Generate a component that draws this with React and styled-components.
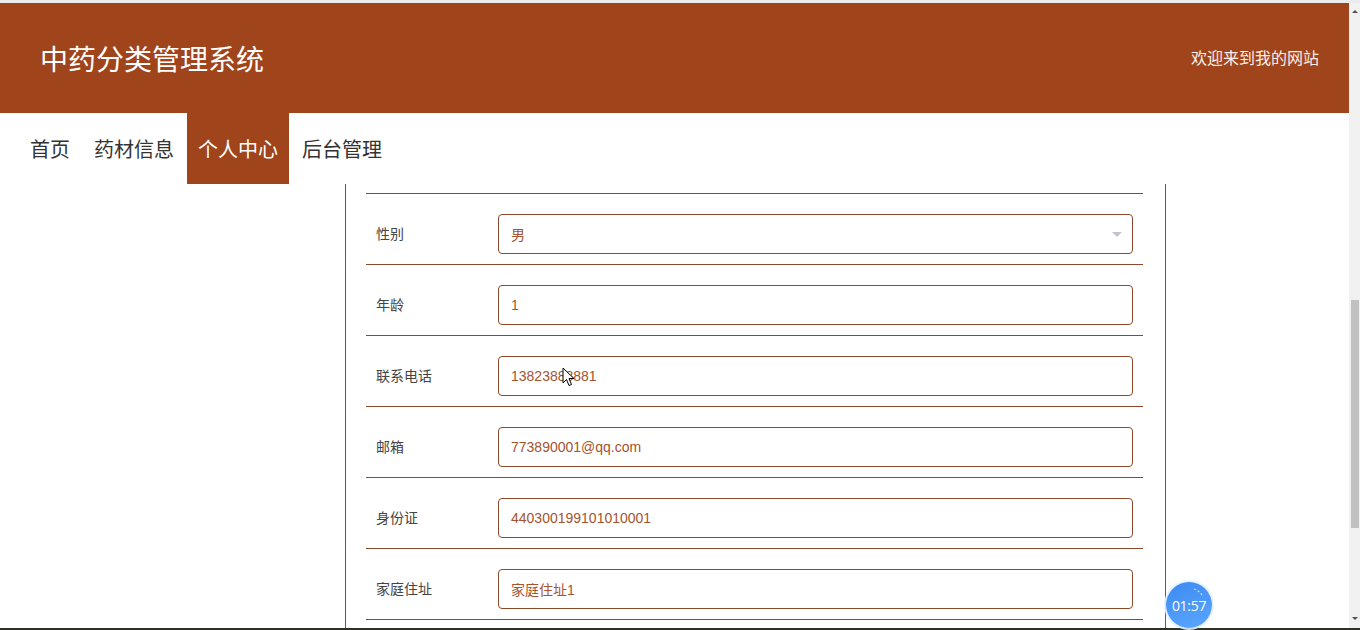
import React from "react";
import styled, { createGlobalStyle } from "styled-components";

const Global = createGlobalStyle`
  html, body { margin: 0; padding: 0; height: 630px; overflow: hidden; background: #fff; }
  body { font-family: "Noto Sans CJK SC", "Noto Sans", sans-serif; }
  * { box-sizing: border-box; }
`;

const Screen = styled.div`
  position: relative;
  width: 1360px;
  height: 630px;
  display: flex;
  flex-direction: column;
  overflow: hidden;
`;

const TopStrip = styled.div`
  height: 3px;
  background: #ebebeb;
  flex: none;
`;

const BottomStrip = styled.div`
  height: 2px;
  background: #2f3124;
  flex: none;
`;

const Body = styled.div`
  flex: 1;
  display: flex;
  min-height: 0;
`;

const Page = styled.div`
  flex: 1;
  min-width: 0;
  overflow: hidden;
  display: flex;
  flex-direction: column;
`;

const Header = styled.header`
  height: 110px;
  flex: none;
  background: #a0441c;
  display: flex;
  align-items: center;
  justify-content: space-between;
  padding: 0 30px 0 40px;
  color: #fff;
`;

const Title = styled.h1`
  margin: 0;
  font-size: 28px;
  font-weight: 400;
  line-height: 1;
  padding-top: 0;
`;

const Welcome = styled.div`
  font-size: 16px;
  color: #fbeee8;
  line-height: 1;
  padding-bottom: 2px;
`;

const Nav = styled.nav`
  height: 71px;
  flex: none;
  display: flex;
  gap: 2px;
  padding-left: 19px;
`;

const Tab = styled.div`
  height: 100%;
  padding: 0 11px;
  display: flex;
  align-items: center;
  font-size: 20px;
  padding-bottom: 1px;
  color: ${(p) => (p.$active ? "#fff" : "#333")};
  background: ${(p) => (p.$active ? "#a0441c" : "transparent")};
`;

const Main = styled.main`
  flex: 1;
  min-height: 0;
  padding-left: 345px;
`;

const Card = styled.section`
  width: 821px;
  height: 100%;
  border-left: 1px solid #8b4a2b;
  border-right: 1px solid #8b4a2b;
  padding: 9px 22px 0 20px;
`;

const Row = styled.div`
  display: flex;
  align-items: center;
  border-top: 1px solid #8b4a2b;
  padding: 20px 10px 10px 10px;
  &:last-child { border-bottom: 1px solid #8b4a2b; }
`;

const Label = styled.label`
  width: 122px;
  flex: none;
  font-size: 14px;
  color: #444;
  padding-bottom: 2px;
`;

const Field = styled.div`
  position: relative;
  flex: 1;
  height: 40px;
  border: 1px solid #8b4a2b;
  border-radius: 4px;
  display: flex;
  align-items: center;
  padding: 0 12px;
  font-family: "Liberation Sans", "Noto Sans CJK SC", sans-serif;
  font-size: 14px;
  color: #a5532f;
`;

const Caret = styled.span`
  position: absolute;
  right: 10px;
  top: 17px;
  width: 0;
  height: 0;
  border-left: 5px solid transparent;
  border-right: 5px solid transparent;
  border-top: 5px solid #c0c4cc;
`;

const Scrollbar = styled.div`
  width: 11px;
  flex: none;
  background: #f1f1f1;
  display: flex;
  flex-direction: column;
  align-items: center;
`;

const Arrow = styled.div`
  width: 0;
  height: 0;
  border-left: 3px solid transparent;
  border-right: 3px solid transparent;
  ${(p) => (p.$down ? "border-top: 3px solid #505050;" : "border-bottom: 3px solid #505050;")}
  margin: ${(p) => (p.$down ? "0 0 8px" : "7px 0 0")};
`;

const Track = styled.div`
  flex: 1;
  width: 100%;
  padding: 287px 1px 0 2px;
`;

const Thumb = styled.div`
  height: 228px;
  background: #c1c1c1;
`;

const Timer = styled.div`
  position: absolute;
  left: 1166px;
  top: 582px;
  width: 46px;
  height: 46px;
  border-radius: 50%;
  background: linear-gradient(160deg, #3d8bf2 0%, #5aa6ff 100%);
  box-shadow: 0 0 0 2px rgba(230, 240, 255, 0.9);
  display: flex;
  align-items: center;
  justify-content: center;
  color: #fff;
  font-family: "Open Sans", "Noto Sans", sans-serif;
  font-size: 14px;
  letter-spacing: -0.3px;
`;

const TimerArc = styled.svg`
  position: absolute;
  left: 0;
  top: 0;
`;

const Cursor = styled.svg`
  position: absolute;
  left: 562px;
  top: 367px;
`;

const rows = [
  { label: "性别", value: "男", select: true },
  { label: "年龄", value: "1" },
  { label: "联系电话", value: "13823888881" },
  { label: "邮箱", value: "773890001@qq.com" },
  { label: "身份证", value: "440300199101010001" },
  { label: "家庭住址", value: "家庭住址1" },
];

export default function App() {
  return (
    <>
      <Global />
      <Screen>
        <TopStrip />
        <Body>
          <Page>
            <Header>
              <Title>中药分类管理系统</Title>
              <Welcome>欢迎来到我的网站</Welcome>
            </Header>
            <Nav>
              <Tab>首页</Tab>
              <Tab>药材信息</Tab>
              <Tab $active>个人中心</Tab>
              <Tab>后台管理</Tab>
            </Nav>
            <Main>
              <Card>
                {rows.map((r) => (
                  <Row key={r.label}>
                    <Label>{r.label}</Label>
                    <Field>
                      {r.value}
                      {r.select && <Caret />}
                    </Field>
                  </Row>
                ))}
              </Card>
            </Main>
          </Page>
          <Scrollbar>
            <Arrow />
            <Track>
              <Thumb />
            </Track>
            <Arrow $down />
          </Scrollbar>
        </Body>
        <BottomStrip />
        <Timer>
          <TimerArc width="46" height="46" viewBox="0 0 46 46">
            <path d="M28 7 A17 17 0 0 1 36 13" fill="none" stroke="rgba(255,255,255,0.75)" strokeWidth="1.2" strokeDasharray="2 2" />
          </TimerArc>
          01:57
        </Timer>
        <Cursor width="13" height="20" viewBox="0 0 13 20">
          <path d="M1 1 L1 16 L4.5 12.5 L7 18.5 L9.5 17.5 L7 11.5 L12 11.5 Z" fill="#fff" stroke="#000" strokeWidth="1" strokeLinejoin="round" />
        </Cursor>
      </Screen>
    </>
  );
}
